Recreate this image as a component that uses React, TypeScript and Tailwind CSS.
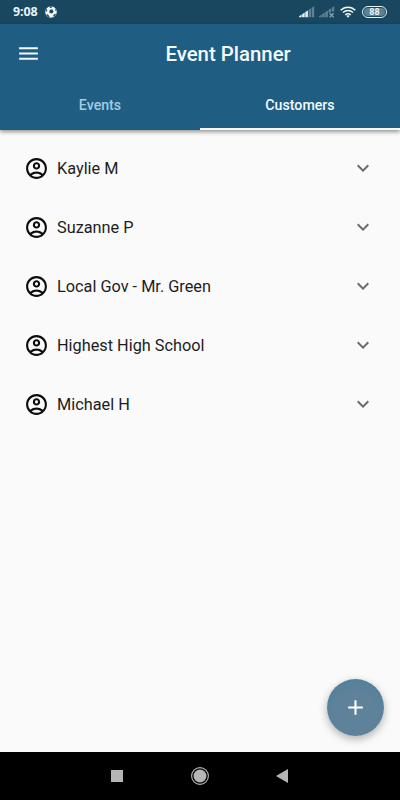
import { useState } from 'react';
import { MdAdd, MdExpandMore, MdMenu, MdOutlineAccountCircle } from 'react-icons/md';

const CUSTOMERS = ['Kaylie M', 'Suzanne P', 'Local Gov - Mr. Green', 'Highest High School', 'Michael H'];

const TABS = ['Events', 'Customers'];

function SoccerBall() {
  return (
    <svg viewBox="0 0 12 12" className="w-3 h-3 ml-[6px]">
      <circle cx="6" cy="6" r="5.8" fill="#f0f7fa" />
      <path d="M4.6 4 7.2 3.3 8.6 5.4 7 7.6 4.4 6.8ZM4.6.3 7.4.4 6.6 1.8 5 1.9ZM10 2.2 11.6 5 10.2 4.6ZM.5 5 1.5 2.8 2.3 4 1.6 5.8ZM1.1 8.8 2.8 8.3 4.5 10.4 4.2 11.5ZM8.2 9.6 9.7 7.8 11 8.2 8.9 11.1Z" fill="#18475f" />
    </svg>
  );
}

function Signal({ missing = false }: { missing?: boolean }) {
  return (
    <svg viewBox="0 0 16 12" className="w-4 h-3">
      <path
        d="M0 11.3V10.3L2.6 8.6V11.3ZM3.1 11.3V8.3L5.7 6.6V11.3ZM6.3 11.3V6.1L8.9 4.4V11.3Z"
        fill={missing ? '#5d8193' : '#e4f0f5'}
      />
      <path
        d={missing ? 'M9.5 6.4V4L12 2.3V6.4ZM12.7 5.6V1.8L15.2.2V5.6Z' : 'M9.5 11.3V4L12 2.3V11.3ZM12.7 11.3V1.8L15.2.2V11.3Z'}
        fill="#5d8193"
      />
      {missing && <path d="M10.6 7.2 14.6 11.2M14.6 7.2 10.6 11.2" stroke="#84a2b0" strokeWidth="1.3" />}
    </svg>
  );
}

function Wifi() {
  return (
    <svg viewBox="0 0 16 12" className="w-4 h-3" fill="none" stroke="#f0f8fb" strokeWidth="1.5">
      <path d="M.7 4.3C4.8.1 11.2.1 15.3 4.3M3 6.6c2.8-2.9 7.2-2.9 10 0M5.3 8.9c1.5-1.6 3.9-1.6 5.4 0" />
      <path d="M6.3 9.8 8 11.8 9.7 9.8Q8 8.8 6.3 9.8Z" fill="#f0f8fb" stroke="none" />
    </svg>
  );
}

function StatusBar() {
  return (
    <div className="h-6 bg-[#18475f] flex items-center pl-[13px] pr-[13px] text-[#e6f3f8]">
      <span className="w-[26px] pt-px text-[12.5px] leading-none font-bold tracking-[-0.1px] font-['Open_Sans',sans-serif]">9:08</span>
      <SoccerBall />
      <div className="ml-auto flex items-center">
        <Signal />
        <span className="w-[4px]" />
        <Signal missing />
        <span className="w-[5px]" />
        <Wifi />
        <div className="ml-[6px] w-[25px] h-3 rounded-full border border-[#e6f3f8] p-px">
          <div className="w-full h-full rounded-full bg-[#5d8193] flex items-center justify-center text-[9px] leading-none font-bold">
            88
          </div>
        </div>
      </div>
    </div>
  );
}

export default function App() {
  const [activeTab, setActiveTab] = useState('Customers');

  return (
    <div className="w-[400px] h-[800px] flex flex-col relative overflow-hidden bg-[#fafafa] font-[Roboto,sans-serif] select-none">
      <StatusBar />

      {/* App bar */}
      <header className="bg-[#205d82] shadow-[0_2px_4px_rgba(0,0,0,0.4)] text-[#f2faff]">
        <div className="h-[58px] flex items-center">
          <button type="button" aria-label="Menu" className="ml-4 cursor-pointer">
            <MdMenu className="w-[25px] h-[25px]" />
          </button>
          <h1 className="ml-[124.4px] pt-[2px] text-[20.4px] leading-6 font-medium whitespace-nowrap">Event Planner</h1>
        </div>
        <div className="flex h-12">
          {TABS.map((tab) => (
            <button
              key={tab}
              type="button"
              onClick={() => setActiveTab(tab)}
              className={`flex-1 pt-px border-b-2 text-[14.2px] font-medium cursor-pointer ${
                activeTab === tab ? 'border-[#f4f8fa] text-[#f2faff]' : 'border-transparent text-[#a3cbe2]'
              }`}
            >
              {tab}
            </button>
          ))}
        </div>
      </header>

      {/* Customer list */}
      <main className="flex-1 pt-[8.5px]">
        {CUSTOMERS.map((name) => (
          <div key={name} className="h-[59.1px] flex items-center pl-6 pr-[25px]">
            <MdOutlineAccountCircle className="w-[25px] h-[25px] text-[#0c0c0c]" />
            <span className="ml-2 pt-[2px] text-[16.3px] leading-6 text-[#1d1d1d]">{name}</span>
            <MdExpandMore className="w-6 h-6 ml-auto text-[#6b6b6b]" />
          </div>
        ))}
      </main>

      <button
        type="button"
        aria-label="Add customer"
        className="absolute left-[326.5px] top-[678.5px] w-[57px] h-[57px] rounded-full bg-[radial-gradient(circle_at_50%_60%,#5e8299_45%,#55819b_75%)] text-white flex items-center justify-center shadow-[0_3px_9px_rgba(0,0,0,0.3)] cursor-pointer"
      >
        <MdAdd className="w-[25px] h-[25px]" />
      </button>

      {/* System navigation */}
      <nav className="h-12 bg-black flex items-center justify-between pl-[111px] pr-[112px]">
        <span className="w-3 h-3 bg-[#b5b5b5]" />
        <svg viewBox="0 0 18 18" className="w-[18px] h-[18px] ml-px">
          <circle cx="9" cy="9" r="8.4" fill="none" stroke="#b5b5b5" strokeWidth="1.1" />
          <circle cx="9" cy="9" r="6.5" fill="#b5b5b5" />
        </svg>
        <svg viewBox="0 0 12 14" className="w-3 h-[14px]">
          <path d="M0 7 12 0V14Z" fill="#b5b5b5" />
        </svg>
      </nav>
    </div>
  );
}
